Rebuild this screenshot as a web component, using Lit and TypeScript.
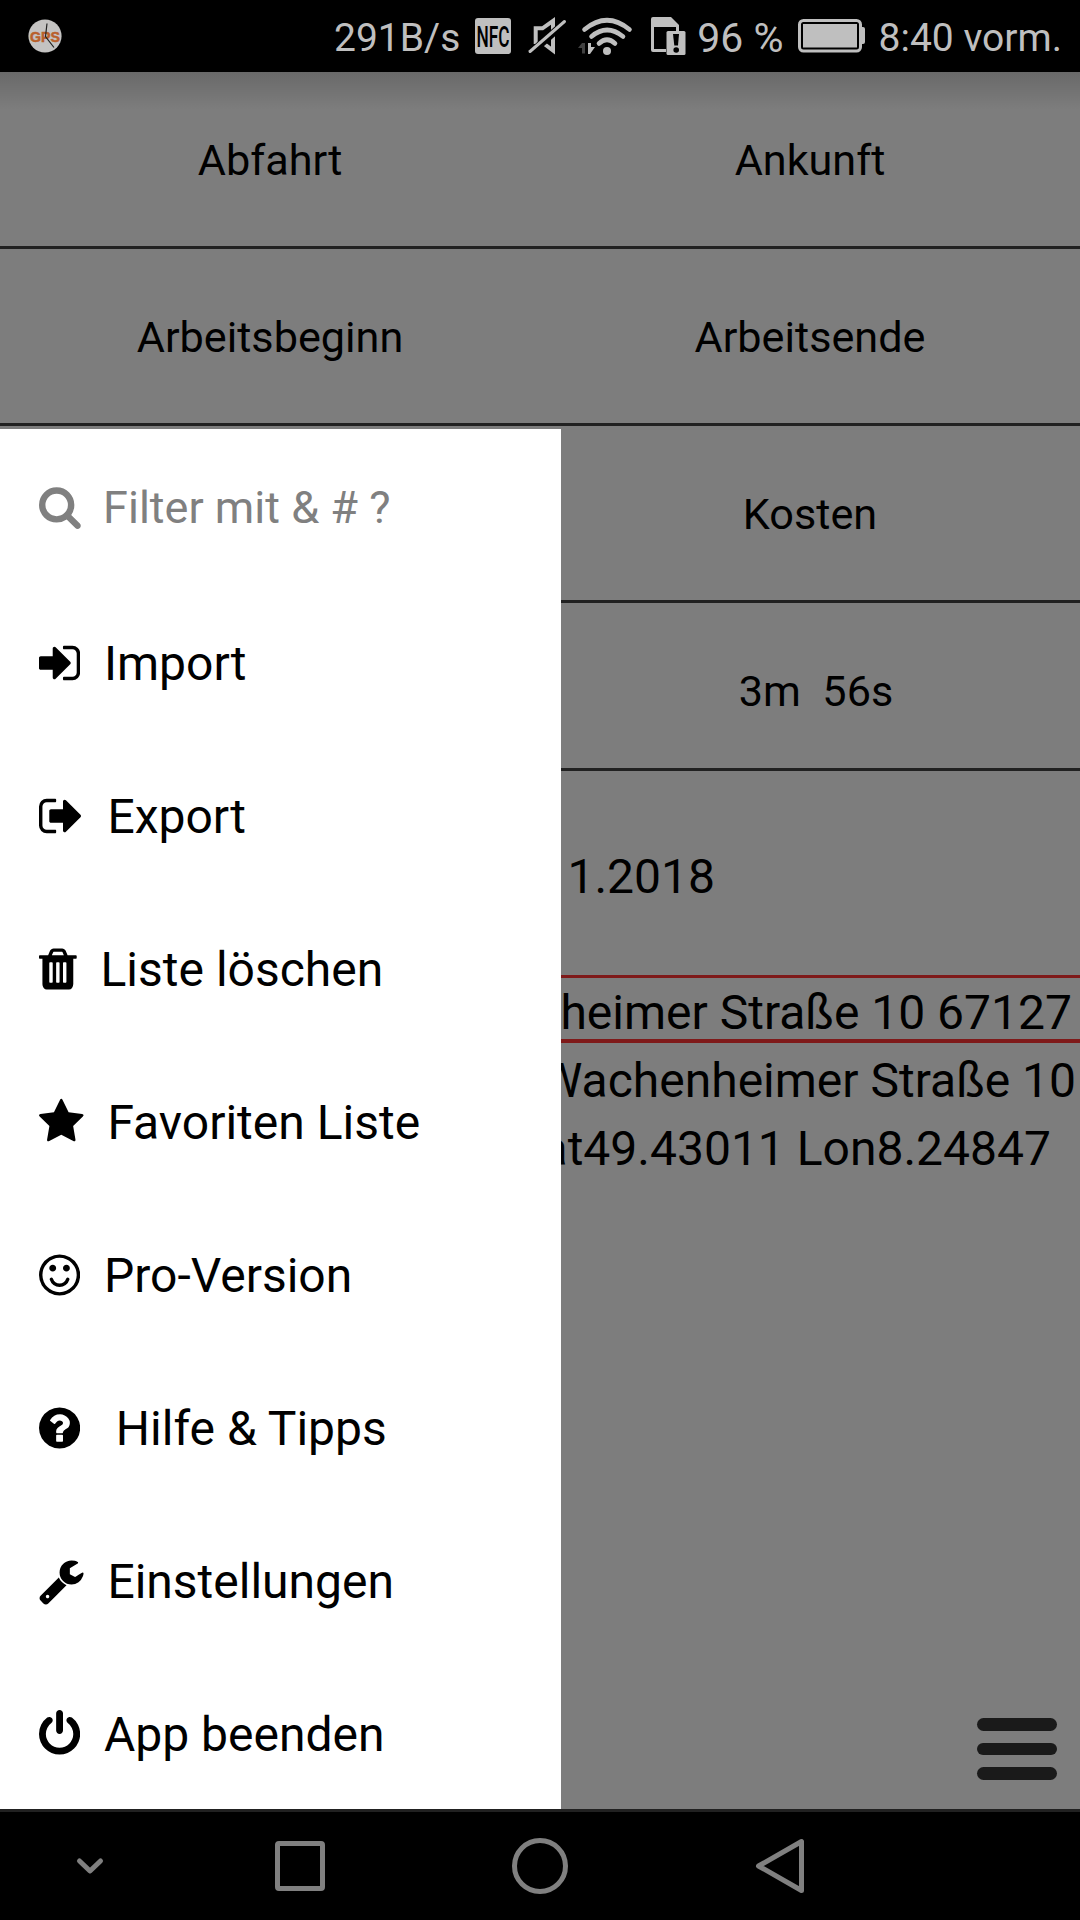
import { LitElement, html, css } from "lit";
import { customElement } from "lit/decorators.js";

interface Glyph {
  x: number;
  w: number;
  d: string;
}

const DISC =
  "m384 192q0 209-103 385.500t-279.500 279.500-385.500 103-385.500-103-279.500-279.500-103-385.500 103-385.500 279.500-279.500 385.500-103 385.500 103 279.500 279.500 103 385.500z";

// Menu glyphs on a 1792-unit em square; x and w give each glyph's own advance box.
const GLYPHS: Record<string, Glyph> = {
  search: {
    x: 64,
    w: 1664,
    d: "M1216 832q0-185-131.500-316.500t-316.500-131.500-316.500 131.500-131.500 316.500 131.500 316.500 316.500 131.500 316.500-131.500 131.500-316.500zm512 832q0 52-38 90t-90 38q-54 0-90-38l-343-342q-179 124-399 124-143 0-273.500-55.500t-225-150-150-225-55.500-273.500 55.500-273.500 150-225 225-150 273.500-55.500 273.500 55.500 225 150 150 225 55.500 273.500q0 220-124 399l343 343q37 37 37 90z",
  },
  signIn: {
    x: 128,
    w: 1536,
    d: "M1312 896q0 26-19 45l-544 544q-19 19-45 19t-45-19-19-45v-288h-448q-26 0-45-19t-19-45v-384q0-26 19-45t45-19h448v-288q0-26 19-45t45-19 45 19l544 544q19 19 19 45zm352-352v704q0 119-84.500 203.500t-203.500 84.500h-320q-13 0-22.500-9.500t-9.500-22.500q0-4-1-20t-.5-26.500 3-23.500 10-19.500 20.500-6.500h320q66 0 113-47t47-113v-704q0-66-47-113t-113-47h-312l-11.500-1-11.500-3-8-5.500-7-9-2-13.500q0-4-1-20t-.5-26.500 3-23.500 10-19.500 20.500-6.500h320q119 0 203.500 84.500t84.500 203.500z",
  },
  signOut: {
    x: 128,
    w: 1664,
    d: "M768 1440q0 4 1 20t.5 26.500-3 23.500-10 19.500-20.500 6.500h-320q-119 0-203.500-84.500t-84.500-203.500v-704q0-119 84.500-203.500t203.500-84.500h320q13 0 22.500 9.500t9.500 22.500q0 4 1 20t.5 26.500-3 23.500-10 19.500-20.500 6.500h-320q-66 0-113 47t-47 113v704q0 66 47 113t113 47h312l11.500 1 11.500 3 8 5.500 7 9 2 13.500zm928-544q0 26-19 45l-544 544q-19 19-45 19t-45-19-19-45v-288h-448q-26 0-45-19t-19-45v-384q0-26 19-45t45-19h448v-288q0-26 19-45t45-19 45 19l544 544q19 19 19 45z",
  },
  trash: {
    x: 192,
    w: 1408,
    d: "M704 1376v-704q0-14-9-23t-23-9h-64q-14 0-23 9t-9 23v704q0 14 9 23t23 9h64q14 0 23-9t9-23zm256 0v-704q0-14-9-23t-23-9h-64q-14 0-23 9t-9 23v704q0 14 9 23t23 9h64q14 0 23-9t9-23zm256 0v-704q0-14-9-23t-23-9h-64q-14 0-23 9t-9 23v704q0 14 9 23t23 9h64q14 0 23-9t9-23zm-544-992h448l-48-117q-7-9-17-11h-317q-10 2-17 11zm928 32v64q0 14-9 23t-23 9h-96v948q0 83-47 143.500t-113 60.500h-832q-66 0-113-58.500t-47-141.500v-952h-96q-14 0-23-9t-9-23v-64q0-14 9-23t23-9h309l70-167q15-37 54-63t79-26h320q40 0 79 26t54 63l70 167h309q14 0 23 9t9 23z",
  },
  star: {
    x: 64,
    w: 1664,
    d: "M1728 647q0 22-26 48l-363 354 86 500q1 7 1 20 0 21-10.500 35.500t-30.500 14.500q-19 0-40-12l-449-236-449 236q-22 12-40 12-21 0-31.500-14.500t-10.500-35.500q0-6 2-20l86-500-364-354q-25-27-25-48 0-37 56-46l502-73 225-455q19-41 49-41t49 41l225 455 502 73q56 9 56 46z",
  },
  smile: {
    x: 128,
    w: 1536,
    d: "M1262 1075q-37 121-138 195t-228 74-228-74-138-195q-8-25 4-48.500t38-31.500q25-8 48.500 4t31.500 38q25 80 92.500 129.500t151.500 49.500 151.500-49.500 92.500-129.500q8-26 32-38t49-4 37 31.500 4 48.500zm-494-435q0 53-37.500 90.500t-90.500 37.500-90.500-37.500-37.500-90.500 37.500-90.500 90.500-37.500 90.500 37.500 37.500 90.500zm512 0q0 53-37.500 90.500t-90.500 37.500-90.500-37.500-37.500-90.500 37.500-90.500 90.500-37.500 90.500 37.500 37.500 90.500zm256 256q0-130-51-248.500t-136.500-204-204-136.500-248.500-51-248.500 51-204 136.500-136.500 204-51 248.500 51 248.500 136.500 204 204 136.500 248.500 51 248.500-51 204-136.500 136.500-204 51-248.500zm128 0q0 209-103 385.500t-279.500 279.500-385.500 103-385.500-103-279.500-279.500-103-385.500 103-385.500 279.500-279.500 385.500-103 385.500 103 279.500 279.500 103 385.500z",
  },
  question: {
    x: 128,
    w: 1536,
    d:
      "M1024 1376v-192q0-14-9-23t-23-9h-192q-14 0-23 9t-9 23v192q0 14 9 23t23 9h192q14 0 23-9t9-23zm256-672q0-88-55.500-163t-138.500-116-170-41q-243 0-371 213-15 24 8 42l132 100q7 6 19 6 16 0 25-12 53-68 86-92 34-24 86-24 48 0 85.500 26t37.500 59q0 38-20 61t-68 45q-63 28-115.500 86.500t-52.500 125.500v36q0 14 9 23t23 9h192q14 0 23-9t9-23q0-19 21.500-49.500t54.500-49.500q32-18 49-28.500t46-35 44.500-48 28-60.500 12.500-81z" +
      DISC,
  },
  wrench: {
    x: 64,
    w: 1664,
    d: "M448 1472q0-26-19-45t-45-19-45 19-19 45 19 45 45 19 45-19 19-45zm644-420l-682 682q-37 37-90 37-52 0-91-37l-106-108q-38-36-38-90 0-53 38-91l681-681q39 98 114.500 173.500t173.500 114.500zm634-435q0 39-23 106-47 134-164.500 217.500t-258.500 83.500q-185 0-316.500-131.500t-131.500-316.500 131.500-316.500 316.500-131.500q58 0 121.500 16.500t107.500 46.500q16 11 16 28t-16 28l-293 169v224l193 107q5-3 79-48.500t135.500-81 70.500-35.500q15 0 23.500 10t8.500 25z",
  },
  power: {
    x: 128,
    w: 1536,
    d: "M1664 896q0 156-61 298t-164 245-245 164-298 61-298-61-245-164-164-245-61-298q0-182 80.500-343t226.500-270q43-32 95.500-25t83.500 50q32 42 24.500 94.500t-49.500 84.500q-98 74-151.500 181t-53.500 228q0 104 40.500 198.500t109.500 163.500 163.500 109.500 198.500 40.500 198.500-40.500 163.500-109.500 109.500-163.500 40.500-198.500q0-121-53.500-228t-151.500-181q-42-32-49.500-84.500t24.500-94.500q31-43 84-50t95 25q146 109 226.500 270t80.500 343zm-640-768v640q0 52-38 90t-90 38-90-38-38-90v-640q0-52 38-90t90-38 90 38 38 90z",
  },
};

const glyph = (name: string, em: number) => {
  const g = GLYPHS[name];
  return html`<svg
    class="glyph"
    width=${(g.w * em) / 1792}
    height=${em}
    viewBox="${g.x} 0 ${g.w} 1792"
  >
    <path fill="currentColor" d=${g.d} />
  </svg>`;
};

const MENU = [
  { icon: "signIn", label: "  Import" },
  { icon: "signOut", label: "  Export" },
  { icon: "trash", label: "  Liste löschen" },
  { icon: "star", label: "  Favoriten Liste" },
  { icon: "smile", label: "  Pro-Version" },
  { icon: "question", label: "   Hilfe & Tipps" },
  { icon: "wrench", label: "  Einstellungen" },
  { icon: "power", label: "  App beenden" },
];

@customElement("status-bar")
class StatusBar extends LitElement {
  static styles = css`
    :host {
      display: flex;
      align-items: center;
      box-sizing: border-box;
      height: 72px;
      padding: 0 18px 0 28px;
      background: #000;
      color: #bfbfbf;
      font-size: 39px;
      line-height: 46px;
      white-space: nowrap;
    }
    svg {
      display: block;
      flex: none;
      overflow: visible;
    }
    .spacer {
      flex: 1;
    }
    .text {
      padding-top: 3px;
    }
    .nfc {
      margin-left: 15px;
    }
    .mute {
      margin-left: 18px;
    }
    .wifi {
      margin-left: 12px;
    }
    .sim {
      margin-left: 19px;
    }
    .level {
      margin-left: 11px;
      font-size: 41px;
    }
    .battery {
      margin-left: 14px;
    }
    .clock {
      margin-left: 13px;
    }
  `;

  render() {
    return html`
      <svg width="34" height="34" viewBox="0 0 34 34">
        <circle cx="17" cy="17" r="16.6" fill="#c4c3c2" />
        <text x="17" y="23" text-anchor="middle" textLength="30" lengthAdjust="spacingAndGlyphs"
          font-family="Liberation Sans, sans-serif" font-weight="700" font-size="15" fill="#b9602b"
          stroke="#b9602b" stroke-width="0.5">GPS</text>
        <path d="M19 4.500L17.500 17.500L26 28.500" fill="none" stroke="#222" stroke-width="1.200" />
      </svg>
      <span class="spacer"></span>
      <span class="text">291B/s</span>
      <svg class="nfc" width="36" height="36" viewBox="0 0 36 36">
        <rect width="36" height="36" rx="3" fill="#bfbfbf" />
        <text x="18" y="29" text-anchor="middle" textLength="33" lengthAdjust="spacingAndGlyphs"
          font-family="Roboto, sans-serif" font-weight="500" font-size="30" fill="#000">NFC</text>
      </svg>
      <svg class="mute" width="37" height="38" viewBox="0 0 37 38">
        <path d="M6.700 27V11.300H13.500L24 3.800V33.500L14 26" fill="none" stroke="#bfbfbf" stroke-width="4" />
        <path d="M1 36.500L36 5.500" stroke="#000" stroke-width="7.500" />
        <path d="M1 34.500L35.500 4.500" stroke="#bfbfbf" stroke-width="3" stroke-linecap="round" />
      </svg>
      <svg class="wifi" width="54" height="38" viewBox="0 0 54 38">
        <g fill="none" stroke="#bfbfbf" stroke-width="4.600" stroke-linecap="round">
          <path d="M6.500 12.500Q29 -6 51.500 12.500" />
          <path d="M13.500 19.500Q29 6.500 45 19.500" />
          <path d="M21 26.500Q29 19 37 26.500" />
        </g>
        <circle cx="29" cy="34" r="4" fill="#bfbfbf" />
        <path d="M0 31L4 26H7V36.500H4V31Z" fill="#404040" />
        <path d="M10 26H13V30H17L12 37H10Z" fill="#bfbfbf" />
      </svg>
      <svg class="sim" width="35" height="38" viewBox="0 0 35 38">
        <path d="M0 2Q0 0 2 0H20L28 8V14H15V35H2Q0 35 0 33ZM3 10V32H15V14H25V10Z" fill="#bfbfbf" fill-rule="evenodd" />
        <rect x="15.500" y="14" width="19" height="24" rx="1.500" fill="#bfbfbf" />
        <path d="M22 17H28L27 28.500H23.300Z" fill="#000" />
        <circle cx="25.200" cy="33" r="2.800" fill="#000" />
      </svg>
      <span class="text level">96 %</span>
      <svg class="battery" width="68" height="34" viewBox="0 0 68 34">
        <rect x="1.500" y="1.500" width="61" height="30.500" rx="4" fill="none" stroke="#bfbfbf" stroke-width="3" />
        <rect x="5" y="5" width="54" height="23.500" fill="#bfbfbf" />
        <path d="M64 8H65Q67 8 67 10V23Q67 25 65 25H64Z" fill="#bfbfbf" />
      </svg>
      <span class="text clock">8:40 vorm.</span>
    `;
  }
}

@customElement("side-menu")
class SideMenu extends LitElement {
  static styles = css`
    :host {
      display: flex;
      flex-direction: column;
      box-sizing: border-box;
      width: 561px;
      height: 1380px;
      overflow: hidden;
      background: #fff;
      color: #000;
      font-size: 48px;
    }
    .row {
      display: flex;
      flex: none;
      align-items: center;
      box-sizing: border-box;
      height: 153px;
      padding-left: 39px;
      white-space: pre;
    }
    .label {
      padding-top: 1px;
    }
    .filter {
      height: 157px;
      padding-bottom: 2px;
      color: #808080;
      font-size: 45px;
    }
    .glyph {
      display: block;
      flex: none;
    }
  `;

  render() {
    return html`
      <div class="row filter">${glyph("search", 45)}<span class="label">${"  Filter mit & # ?"}</span></div>
      ${MENU.map((m) => html`<div class="row">${glyph(m.icon, 48)}<span class="label">${m.label}</span></div>`)}
    `;
  }
}

@customElement("nav-bar")
class NavBar extends LitElement {
  static styles = css`
    :host {
      display: grid;
      grid-template-columns: 180px 240px 240px 240px 180px;
      place-items: center;
      box-sizing: border-box;
      height: 111px;
      border-top: 3px solid #212121;
      background: #000;
    }
    svg {
      display: block;
      fill: none;
      stroke: #808080;
      stroke-width: 5;
      stroke-linejoin: round;
      stroke-linecap: round;
    }
  `;

  render() {
    return html`
      <svg width="60" height="60" viewBox="0 0 60 60"><path d="M19.500 25L30 35L40.500 25" /></svg>
      <svg width="60" height="60" viewBox="0 0 60 60"><rect x="7.500" y="7.500" width="45" height="45" rx="1.500" /></svg>
      <svg width="60" height="60" viewBox="0 0 60 60"><circle cx="30" cy="30" r="25.500" /></svg>
      <svg width="60" height="60" viewBox="0 0 60 60"><path d="M8.500 30L51.500 5.500V54.500Z" /></svg>
    `;
  }
}

@customElement("app-root")
class AppRoot extends LitElement {
  static styles = css`
    :host {
      display: flex;
      flex-direction: column;
      position: relative;
      width: 1080px;
      height: 1920px;
      overflow: hidden;
      font-family: Roboto, sans-serif;
    }
    .content {
      flex: 1;
      min-height: 0;
      background: linear-gradient(rgba(0, 0, 0, 0.16), transparent 38px) #7d7d7d;
      color: #000;
    }
    .pair {
      display: grid;
      grid-template-columns: 1fr 1fr;
      place-items: center;
      box-sizing: border-box;
      height: 177px;
      padding-top: 3px;
      border-bottom: 3px solid #212121;
      font-size: 43.200px;
    }
    .times {
      height: 168px;
      padding-top: 12px;
    }
    .total {
      padding-left: 12px;
      white-space: pre;
    }
    .date,
    .line {
      display: flex;
      align-items: center;
      justify-content: flex-end;
      box-sizing: border-box;
      font-size: 48px;
      white-space: nowrap;
    }
    .date {
      height: 204px;
      padding: 6px 365px 0 0;
    }
    .line {
      height: 68px;
    }
    .selected {
      border-top: 3px solid #7f1a1a;
      border-bottom: 4px solid #7f1a1a;
      padding: 7px 8px 0 0;
    }
    .address {
      padding: 6px 4px 0 0;
    }
    .coords {
      padding: 7px 29px 0 0;
    }
    .drawer {
      position: absolute;
      left: 0;
      top: 429px;
    }
    .burger {
      position: absolute;
      left: 977px;
      top: 1718px;
      display: grid;
      gap: 12px;
      width: 80px;
    }
    .bar {
      height: 12.500px;
      border-radius: 7px;
      background: #1a1a1a;
    }
  `;

  render() {
    return html`
      <status-bar></status-bar>
      <main class="content">
        <div class="pair"><span>Abfahrt</span><span>Ankunft</span></div>
        <div class="pair"><span>Arbeitsbeginn</span><span>Arbeitsende</span></div>
        <div class="pair"><span></span><span>Kosten</span></div>
        <div class="pair times"><span></span><span class="total">${"3m  56s"}</span></div>
        <div class="date">1.2018</div>
        <div class="line selected">heimer Straße 10 67127</div>
        <div class="line address">Wachenheimer Straße 10</div>
        <div class="line coords">Lat49.43011 Lon8.24847</div>
      </main>
      <nav-bar></nav-bar>
      <side-menu class="drawer"></side-menu>
      <div class="burger"><div class="bar"></div><div class="bar"></div><div class="bar"></div></div>
    `;
  }
}
